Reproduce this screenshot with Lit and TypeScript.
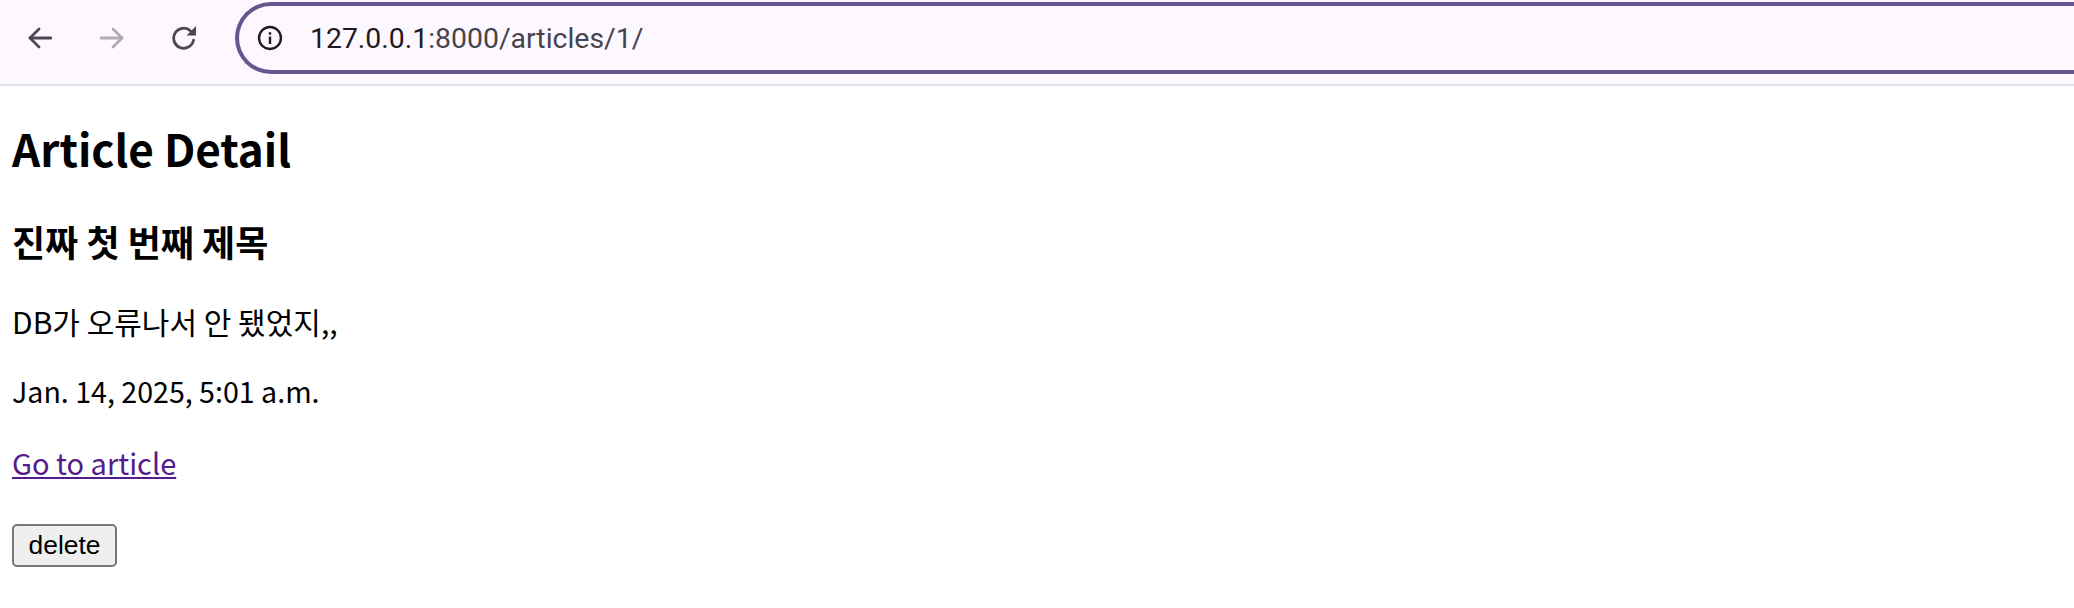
import { LitElement, html, css } from "lit";
import { customElement } from "lit/decorators.js";

@customElement("app-root")
export class AppRoot extends LitElement {
  static styles = css`
    :host { display: block; width: 2074px; height: 608px; overflow: hidden; background: #fff; font-family: "Noto Sans CJK KR", "Noto Sans", sans-serif; color: #000; }
    .toolbar { height: 84px; box-sizing: content-box; border-bottom: 2px solid #e4e0ea; background: #fdf8ff; display: flex; align-items: flex-start; overflow: hidden; }
    .nav { display: flex; gap: 48px; padding: 26px 0 0 28px; width: 235px; box-sizing: border-box; flex: none; }
    .nav svg { width: 24px; height: 24px; display: block; }
    .omni { flex: none; width: 2000px; height: 72px; box-sizing: border-box; margin-top: 2px; border: 4px solid #665590; border-right: none; border-radius: 36px 0 0 36px; display: flex; align-items: center; padding-left: 18px; gap: 27px; color: #1d1b20; font-family: Roboto, sans-serif; font-size: 28.4px; }
    .omni svg { width: 26px; height: 26px; display: block; flex: none; }
    .dim { color: #46434d; }
    main { padding: 0 12px; }
    h1 { font-size: 44px; font-weight: 700; line-height: 60px; margin: 32px 0 0; }
    h2 { font-size: 36px; font-weight: 700; line-height: 46px; margin: 40px 0 0; }
    p { font-size: 30px; line-height: 40px; margin: 37px 0 0; }
    .date { font-size: 28.6px; margin-top: 30px; }
    .link { font-size: 29px; margin-top: 31px; }
    a { color: #551a8b; text-decoration: underline; }
    button { display: block; margin-top: 42px; width: 105px; height: 43px; box-sizing: border-box; padding: 0; background: #efefef; border: 2px solid #767676; border-radius: 5px; font-family: "Liberation Sans", Arial, sans-serif; font-size: 26.4px; color: #000; }
  `;

  render() {
    return html`
      <div class="toolbar">
        <div class="nav">
          <svg viewBox="0 0 24 24" fill="none" stroke="#4b4753" stroke-width="2.8" stroke-linecap="round" stroke-linejoin="round"><path d="M23 12H2"/><path d="M11 3 2 12l9 9"/></svg>
          <svg viewBox="0 0 24 24" fill="none" stroke="#afabb4" stroke-width="2.8" stroke-linecap="round" stroke-linejoin="round"><path d="M1 12h21"/><path d="M13 3l9 9-9 9"/></svg>
          <svg viewBox="0 0 24 24" fill="none"><path d="M21.5 14.2A10 10 0 1 1 18.6 5" stroke="#4b4753" stroke-width="2.8" stroke-linecap="round"/><path d="M14.5 9.5H24V0Z" fill="#4b4753"/></svg>
        </div>
        <div class="omni">
          <svg viewBox="0 0 28 28" fill="none"><circle cx="14" cy="14" r="11.8" stroke="#1d1b20" stroke-width="2.6"/><rect x="12.7" y="12.4" width="2.6" height="8" fill="#1d1b20"/><rect x="12.7" y="7.8" width="2.6" height="2.7" fill="#1d1b20"/></svg>
          <span>127.0.0.1<span class="dim">:8000/articles/1/</span></span>
        </div>
      </div>
      <main>
        <h1>Article Detail</h1>
        <h2>진짜 첫 번째 제목</h2>
        <p>DB가 오류나서 안 됐었지,,</p>
        <p class="date">Jan. 14, 2025, 5:01 a.m.</p>
        <p class="link"><a href="#">Go to article</a></p>
        <button>delete</button>
      </main>
    `;
  }
}
